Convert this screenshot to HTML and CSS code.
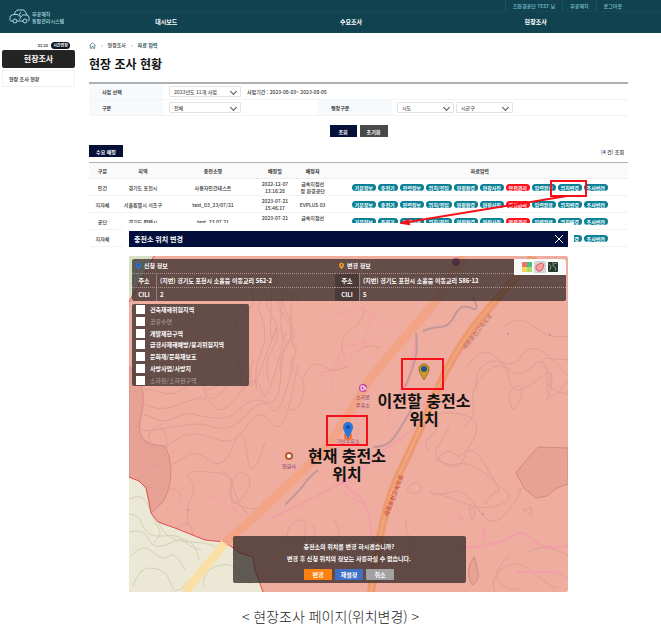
FILE: index.html
```html
<!DOCTYPE html>
<html lang="ko">
<head>
<meta charset="utf-8">
<title>현장 조사 현황</title>
<link rel="stylesheet" href="styles.css">
</head>
<body>
<div class="stage">
  <div class="page">
    <header class="header">
      <a class="logo" href="#">
        <svg class="logo-car" viewBox="0 0 21 15" aria-hidden="true">
          <path d="M4 12H2Q1 12 1 10.500V8.500Q1 6.500 3 6L5 5.500 7 2Q7.500 1 9 1h5q1.500 0 2 1l2 4q2 .5 2 2.500V11q0 1-1 1M8 12h6M5 5.500h4M13 6h5"/>
          <circle cx="6" cy="12" r="2"/><circle cx="16" cy="12" r="2"/>
          <path d="M12 3 9.500 7h3L10.500 10.500"/>
        </svg>
        <span>무공해차<br>통합관리시스템</span>
      </a>
      <div class="user-links"><a href="#">즈환경공단 TEST 님</a><a href="#">무공해차</a><a href="#">로그아웃</a></div>
      <nav class="menu"><a href="#">대시보드</a><a href="#">수요조사</a><a href="#">현장조사</a></nav>
    </header>
    <div class="columns">
      <aside class="sidebar">
        <div class="session"><span>02:20</span><button>시간연장</button></div>
        <a class="side-title" href="#">현장조사</a>
        <a class="side-item" href="#">현장 조사 현황</a>
      </aside>
      <main class="main">
        <div class="crumbs">
          <svg class="home" viewBox="0 0 7 7" aria-hidden="true"><path d="M.5 3.500 3.500.7l3 2.800M1.200 3v3.300h1.600V4.500h1.400v1.800h1.600V3"/></svg>
          <i>›</i><span>현장조사</span><i>›</i><b>자료 입력</b>
        </div>
        <h1>현장 조사 현황</h1>
        <form class="search">
          <div class="search-row">
            <label class="name" for="project">사업 선택</label>
            <div class="field"><span class="pick wide"><select id="project"><option>2023년도 11개 사업</option></select></span><span>사업기간 : 2023-08-03~ 2023-08-05</span></div>
          </div>
          <div class="search-row split">
            <label class="name" for="kind">구분</label>
            <div class="field"><span class="pick wide"><select id="kind"><option>전체</option></select></span></div>
            <label class="name" for="sido">행정구분</label>
            <div class="field near"><span class="pick"><select id="sido"><option>시도</option></select></span><span class="pick"><select aria-label="시군구"><option>시군구</option></select></span></div>
          </div>
          <div class="actions"><button type="button">조회</button><button type="button" class="reset">초기화</button></div>
        </form>
        <div class="list-head"><button>수요 매핑</button><span>[<b>4</b> 건] 조회</span></div>
        <table>
          <colgroup><col class="c-kind"><col class="c-area"><col class="c-name"><col class="c-date"><col class="c-date"><col></colgroup>
          <thead><tr><th>구분</th><th>지역</th><th>충전소명</th><th>배정일</th><th>배정자</th><th>자료입력</th></tr></thead>
          <tbody>
            <tr><td>민간</td><td>경기도 포천시</td><td>사용자민간테스트</td><td>2022-12-07<br>13:16:28</td><td>급속지점선<br>정 환경공단</td>
              <td><div class="pills"><button>기본정보</button><button class="short">충전기</button><button>전력정보</button><button class="long">위치/진입</button><button>현장환경</button><button>현장사진</button><button class="red">안전관리</button><button>입력완료</button><button>위치변경</button><button>조사반려</button></div></td></tr>
            <tr><td>지자체</td><td>서울특별시 서초구</td><td>test_03_23/07/21</td><td>2023-07-21<br>15:46:17</td><td>EVPLUS 03</td>
              <td><div class="pills"><button>기본정보</button><button class="short">충전기</button><button>전력정보</button><button class="long">위치/진입</button><button>현장환경</button><button>현장사진</button><button class="red">안전관리</button><button>입력완료</button><button>위치변경</button><button>조사반려</button></div></td></tr>
            <tr><td>공단</td><td>경기도 평택시</td><td>test_23.07.21</td><td>2023-07-21<br>15:40:02</td><td>급속지점선<br>정 환경공단</td>
              <td><div class="pills"><button>기본정보</button><button class="short">충전기</button><button>전력정보</button><button class="long">위치/진입</button><button>현장환경</button><button>현장사진</button><button class="red">안전관리</button><button>입력완료</button><button>위치변경</button><button>조사반려</button></div></td></tr>
            <tr><td>지자체</td><td></td><td></td><td></td><td></td>
              <td><div class="pills"><button>기본정보</button><button class="short">충전기</button><button>전력정보</button><button class="long">위치/진입</button><button>현장환경</button><button>현장사진</button><button class="red">안전관리</button><button>입력완료</button><button>위치변경</button><button>조사반려</button></div></td></tr>
          </tbody>
        </table>
      </main>
    </div>
  </div>

  <section class="dialog" role="dialog" aria-labelledby="dialog-title">
    <div class="dialog-bar">
      <h2 id="dialog-title">충전소 위치 변경</h2>
      <button aria-label="닫기"><svg viewBox="0 0 10 10"><path d="M1 1l8 8M9 1L1 9"/></svg></button>
    </div>
    <div class="map">
      <svg class="map-art" viewBox="0 0 439 336" preserveAspectRatio="xMidYMid slice">
        <rect width="439" height="336" fill="#efada0"/>
        <path class="shade" d="M0 110Q20 130 12 160T36 190L40 200Q46 225 34 246L22 257 17 232 0 221Z"/>
        <path class="shade" d="M387 217 398 203 409 191 439 192V228L428 232 418 240 407 242 396 233Z"/>
        <path class="shade" d="M345 301q-10 14-2 28 8-4 6-14t-4-14Z"/>
        <g class="contour">
          <path d="M0 128q14-10 30-4t24-6 18 8 24-12 16 4 12-16"/>
          <path d="M0 138q16-8 30-2t28-6 18 6 26-10 20-4 14-20 10-24-4-28 6-22"/>
          <path d="M0 148q12-2 20 2t18 2 24-8 22 6 26-12 22-4 16-24 8-30-4-24 8-18"/>
          <path d="M2 160q12-4 22 2t22 0 18-4 22 4 26-10 24-6 16-28 10-34-4-26 6-18"/>
          <path d="M6 170q8 6 20 4t24-4 18-2 20 4 30-14 24-6 18-28 6-34-4-30 8-14"/>
          <path d="M10 174q4 16 14 18t20-6 20-8 26 6 28-14 24-4 20-24 8-32"/>
          <path d="M22 176q4-8 10-4t6 16-6 14-10-12 0-14Z"/>
          <path d="M10 216q8-8 20-6t24-8 26 2 24-14 14 8 18-12M28 208q-14 8-18 16t22 8 18 14"/>
          <path d="M60 270q-4-16 2-28t-2-20 20-6 22 14 10 20 24-6M92 214q10 6 14 22t14 22"/>
          <path d="M104 225q6-14 14-6t-4 22-12-2 2-14Z"/>
          <path d="M128 134q-4-20 4-38t0-36 10-16M140 126q-6-18 4-34t-2-34 10-14M152 118q-4-14 6-28t-4-32 8-14"/>
          <path d="M126 10q-6 16-2 28t-10 20 0 20-8 30M164 100q-6 12 4 18t6 22-14 14"/>
          <path d="M0 275q12-12 24-2t26-2 14 14 20 0M0 292q18-12 30 0t26-2 22 8M0 310q16-10 24 2t24 2 18 10 16-8"/>
          <path d="M0 328q12-16 24-6t18 2 14 8M76 334q4-18 20-20t20-10"/>
          <path d="M372 74q16-18 32-4t35 10M338 110q16-22 30-8t26-4 45 22"/>
          <path d="M348 134q-4-18 8-26t22 4 26-2 14 16 21-2M334 172q14-12 10-26t14-30 22 6 28 2 10 20"/>
          <path d="M439 104 416 102 412 108 422 118 420 130 428 136 439 138"/>
          <path d="M380 144q0-12 8-14t4 10-8 14Z"/>
          <path d="M300 194q-8-4 2-14t6-18 22-4 14 26-18 14-20 6M320 170q-6 14-12 22t8 16 20-8 22 12 12 24-14 12"/>
          <path d="M308 204q10 6 20 4t20 4 16 12 14 12-6 12-28 2-22-8-20-4M300 236q12 4 24 0t26 18 30 0 10-20 22-10"/>
          <path d="M284 228q6-4 8 3t-8 6-2-9ZM342 252q5-2 3 8t-5-8ZM394 254l8-2 1 7Z"/>
          <path d="M278 264q-4 10 4 18t-2 16M400 296q12-8 28-2t11 10M366 336q-6-14 8-24t30 4 24 16"/>
          <path d="M380 300q-14 12-12 22t22 12M160 288q-6-14 6-22t10 12-6 18M184 268q6 10-4 22M204 262q10 12 4 24"/>
          <path d="M220 110q-16 8-26 0t-20 12M216 100q-10-14 6-26t12-24M252 92q-16-6-24 4"/>
        </g>
        <path d="M0 0H25L0 46Z" fill="#d8dfc7"/>
        <path d="M0 221 10 225 17 232Q20 246 22 257L29 266 46 272 76 284 96 286 111 297 124 301 126 314 134 336H0Z" fill="#ebe9d5"/>
        <g class="contour green"><path d="M0 243q14-8 20 8t10 22-6 14M0 258q10 0 14 12t20 10 20 4 18 10M0 276q16-4 20 8t24 2 26 18M2 300q12-14 22-4t16 4 16 14M4 330q6-20 20-18t18 16 16-2M74 330q0-16 14-20t20 4 14 14M30 268q8 18 30 18t30 8"/></g>
        <path d="M0 46 25 0M0 221 10 225 17 232Q20 246 22 257L29 266 46 272 76 284 96 286 111 297 124 301 126 314 134 336" class="limit"/>
        <g class="lane">
          <path d="M204 60l28-8 22 14 28 12 14-14 22-22M222 32l20 30-10 32-14 8-20 14M196 200l-14 10-20 2-14-10M78 240l20 8 16 12 14 0 6-4"/>
          <path d="M186 118l18-4 0 22M204 114l10-24 26-4 20-10"/>
          <path d="M236 134q-14 24-8 32t-8 30 4 32M240 210l18-10 10-8M214 236l30 18 24-12"/>
          <path d="M142 262q36-16 64-32 16-6 28-18t30-24l20-14" class="broad"/>
          <path d="M205 214q10 16 22 24t14 30 14 18" class="broad"/>
          <path d="M294 150 340 86 384 20M288 78l-8 44-22 40" class="broad"/>
          <path d="M334 292q24-2 36-6t18-8 16 6 35 6M354 286l2-14M330 260l6 6M386 316h40l13 6" class="broad"/>
        </g>
        <path d="M56 336 96 287" stroke="#fae0a7" stroke-width="9" fill="none"/>
        <path d="M96 287 122 264 196 194Q214 168 242 121L306 46 334 0" class="highway soft"/>
        <path d="M242 336 251 281Q258 246 266 227L292 171 316 117Q334 82 356 57L405 0" class="highway"/>
        <path d="M242 336 251 281Q258 246 266 227L292 171 316 117Q334 82 356 57L405 0" class="median"/>
        <path class="river" d="M294 75q10-4 18-4t14-12 16-7 2-11M287 77q2 16-1 27t-10 27M156 249q16-16 20-22t13-13M244 191q12 0 18-6t24-38"/>
        <g class="road-name">
          <text transform="translate(336 94) rotate(-51)">세종포천고속도로</text>
          <text transform="translate(259 261) rotate(-69)" class="strong">세종포천고속도로</text>
        </g>
        <circle cx="327" cy="6" r="4" fill="#9f4e84"/>
        <circle cx="234" cy="132" r="4" fill="#c6459b"/><path d="M232 130h3v4h-3zM235 131l2 1v2" fill="none" stroke="#fff"/>
        <circle cx="160" cy="200" r="3" fill="#fff" stroke="#b9552f" stroke-width="2"/>
        <g class="place"><text x="234" y="143">소리로</text><text x="234" y="151">주유소</text><text x="160" y="212">현금사</text><text x="219" y="187">기산주유소</text></g>
        <g fill="#b89398"><circle cx="354" cy="258" r="1"/><circle cx="379" cy="78" r="1"/><circle cx="421" cy="79" r="1"/><circle cx="59" cy="254" r="1"/></g>
        <circle cx="219" cy="180" r="3" fill="none" stroke="#ff6c18" stroke-width="2"/>
        <path d="M219 183Q214 174 214 171a5 5 0 0 1 10 0Q224 174 219 183Z" fill="#2876dc"/><circle cx="219" cy="171" r="2" fill="#154f9f"/>
        <path d="M295 124Q290 116 290 113a5 5 0 0 1 10 0Q300 116 295 124Z" fill="#d29a20" stroke="#8d7132"/><circle cx="295" cy="113" r="3" fill="#1b568d"/>
        <g class="mark"><rect x="273" y="103" width="41" height="30"/><rect x="198" y="160" width="40" height="29"/></g>
        <g class="callout"><text x="295" y="151">이전할 충전소</text><text x="295" y="169">위치</text><text x="218" y="206">현재 충전소</text><text x="218" y="224">위치</text></g>
      </svg>
      <div class="map-panels">
        <div class="info">
          <dl><div class="info-head"><svg viewBox="0 0 6 8"><path d="M3 8Q0 4 0 3a3 3 0 0 1 6 0Q6 4 3 8Z" fill="#2378df"/><circle cx="3" cy="3" r="1" fill="#114c9b"/></svg>신청 정보</div>
            <div><dt>주소</dt><dd>(지번) 경기도 포천시 소흘읍 이동교리 562-2</dd></div><div><dt>CILI</dt><dd>2</dd></div></dl>
          <dl class="after"><div class="info-head"><svg viewBox="0 0 6 8"><path d="M3 8Q0 4 0 3a3 3 0 0 1 6 0Q6 4 3 8Z" fill="#eda01d"/><circle cx="3" cy="3" r="1" fill="#44433c"/></svg>변경 정보</div>
            <div><dt>주소</dt><dd>(지번) 경기도 포천시 소흘읍 이동교리 586-12</dd></div><div><dt>CILI</dt><dd>5</dd></div></dl>
          <div class="tools">
            <button aria-label="일반 지도"><svg viewBox="0 0 10 10"><path fill="#ec7568" d="M0 0h5v5H0z"/><path fill="#4bc07a" d="M5 0h5v5H5z"/><path fill="#f5d75f" d="M0 5h5v5H0z"/><path fill="#a8dc68" d="M5 5h5v5H5z"/></svg></button>
            <button class="on" aria-label="규제 지역"><svg viewBox="0 0 10 10"><path d="M1 4l3-2 3-1 2 2-1 3-2 3-3 0-2-2z" fill="#f3a2a2" stroke="#df5961"/></svg></button>
            <button aria-label="위성 지도"><svg viewBox="0 0 10 10"><rect width="10" height="10" rx="1" fill="#26382e"/><path d="M1 2l2 2-1 4M5 0v4l3 2-1 3M6 2l3-1" fill="none" stroke="#80937a"/></svg></button>
          </div>
        </div>
        <div class="layers">
          <label><input type="checkbox">건축재해위험지역</label>
          <label class="off"><input type="checkbox">공유수면</label>
          <label><input type="checkbox">개발제한구역</label>
          <label><input type="checkbox">급경사재해예방/붕괴위험지역</label>
          <label><input type="checkbox">문화재/문화재보호</label>
          <label><input type="checkbox">사방사업/사방지</label>
          <label class="off"><input type="checkbox">소하천/소하천구역</label>
        </div>
        <div class="confirm">
          <p>충전소의 위치를 변경 하시겠습니까?</p>
          <p>변경 후 신청 위치의 정보는 사용하실 수 없습니다.</p>
          <div><button class="ok">변경</button><button class="redo">재설정</button><button class="cancel">취소</button></div>
        </div>
      </div>
    </div>
  </section>
  <svg class="pointer" viewBox="0 0 188 48" aria-hidden="true"><rect x="151" y="2" width="35" height="15"/><path d="M167 17 8 43"/><path class="tip" d="M2 44 8 41 9 45Z"/></svg>
</div>
<p class="caption">&lt; 현장조사 페이지(위치변경) &gt;</p>
</body>
</html>
```
FILE: styles.css
```css
* { box-sizing: border-box; }
body { margin: 0; background: #fff; color: #333; font: 500 5px/7px "Noto Sans CJK KR", "Noto Sans", sans-serif; }
a { color: inherit; text-decoration: none; }
button, select { font: inherit; padding: 0; border: 0; margin: 0; }
h1, h2, p, dl, dd { margin: 0; }
svg { display: block; }
.stage { display: grid; position: relative; }
.page, .dialog { grid-area: 1 / 1; min-width: 0; }

.header { display: grid; grid-template: 12px 21px / 74px 1fr; background: #10434f; color: #fff; }
.logo { grid-row: 1 / 3; display: flex; align-items: center; gap: 2px; padding-left: 9px; color: #a9d5de; white-space: nowrap; }
.logo-car { width: 21px; height: 15px; flex: none; fill: none; stroke: #a9d5de; }
.user-links { display: flex; justify-content: flex-end; padding-right: 32px; color: #79bfcd; line-height: 12px; border-bottom: 1px solid #144a57; }
.user-links a { padding: 0 7px; border-left: 1px solid #1b5361; }
.menu { display: grid; grid-template-columns: repeat(3, 1fr); padding-right: 33px; text-align: center; font-weight: 700; font-size: 6px; line-height: 20px; }

.columns { display: grid; grid-template-columns: 75px 1fr; }
.sidebar { padding: 8px 0 0 2px; }
.session { display: flex; justify-content: flex-end; align-items: center; gap: 3px; padding-right: 5px; height: 9px; font-size: 4px; }
.session button { width: 19px; height: 7px; border-radius: 4px; background: #0c1720; color: #fff; font-weight: 700; line-height: 7px; }
.side-title { display: block; border-radius: 2px; background: #242424; color: #fff; text-align: center; font-weight: 700; font-size: 8px; line-height: 18px; }
.side-item { display: block; margin-top: 2px; padding-left: 6px; border: 1px solid #f1f1f1; line-height: 15px; color: #222; }

.main { padding: 8px 33px 0 14px; }
.crumbs { display: flex; align-items: center; gap: 5px; line-height: 8px; }
.crumbs i { font-style: normal; color: #4a9cad; }
.crumbs b { color: #274b5b; }
.home { width: 7px; height: 7px; fill: none; stroke: #78949d; }
h1 { margin: 7px 0 10px; color: #111; font-size: 12px; line-height: 16px; }
.search { border-top: 2px solid #b0b0b0; }
.search-row { display: grid; grid-template-columns: 74px 1fr; height: 16px; border-bottom: 1px solid #f4f4f4; }
.search-row.split { grid-template-columns: 74px 155px 74px 1fr; }
.name { padding-left: 13px; background: #f6fafc; color: #222; line-height: 15px; }
.field { display: flex; align-items: center; gap: 6px; padding-left: 6px; }
.field.near { gap: 2px; padding-left: 5px; }
.pick { position: relative; width: 57px; height: 11px; border: 1px solid #e3e3e3; border-radius: 1px; }
.pick.wide { width: 72px; }
.pick select { display: block; width: 100%; height: 9px; padding-left: 4px; appearance: none; background: #fff; color: #555; line-height: 9px; }
.pick::after { content: ""; position: absolute; right: 4px; top: 2px; width: 4px; height: 4px; border: solid #555; border-width: 0 1px 1px 0; transform: rotate(45deg); }
.actions { display: flex; justify-content: center; gap: 3px; margin: 9px 0 8px; }
.actions button { width: 27px; height: 12px; background: #050f38; color: #fff; font-weight: 700; }
.actions .reset { width: 28px; background: #494949; }
.list-head { display: flex; justify-content: space-between; align-items: center; margin-bottom: 5px; padding-right: 4px; }
.list-head button { width: 34px; height: 12px; background: #050f38; color: #fff; font-weight: 700; }
.list-head b { color: #3353b0; }

table { width: 100%; table-layout: fixed; border-collapse: separate; border-spacing: 0; border-top: 1px solid #b3b3b3; text-align: center; }
.c-kind { width: 5%; }
.c-area { width: 10%; }
.c-name { width: 16%; }
.c-date { width: 7%; }
th { height: 16px; padding: 0; border-bottom: 1px solid #eee; background: #fafafa; color: #333; }
td { height: 17px; padding: 0; border-bottom: 1px solid #f3f3f3; white-space: nowrap; }
.pills { display: flex; justify-content: center; gap: 2px; }
.pills button { width: 24px; height: 7px; border-radius: 4px; background: #087f95; color: #fff; font-weight: 700; line-height: 7px; }
.pills .short { width: 20px; }
.pills .long { width: 26px; }
.pills .red { background: #f80f19; }

.dialog { margin: 223px 87px 0 123px; padding: 8px 6px 0; background: #fff; z-index: 1; }
.dialog-bar { display: flex; justify-content: space-between; align-items: center; height: 16px; padding: 0 4px 0 5px; background: #030f3a; color: #fff; }
h2 { font-size: 7px; line-height: 16px; }
.dialog-bar button { background: none; }
.dialog-bar svg { width: 10px; height: 10px; fill: none; stroke: #fff; }
.map { display: grid; margin-top: 9px; aspect-ratio: 439 / 336; border-radius: 2px; overflow: hidden; }
.map-art, .map-panels { grid-area: 1 / 1; width: 100%; height: 100%; min-height: 0; }
.contour { fill: none; stroke: #de9f93; }
.contour.green { stroke: #d3cfb9; }
.shade { fill: #e8a195; stroke: #d08a7e; }
.limit { fill: none; stroke: #e5494c; }
.lane { fill: none; stroke: #f59da8; }
.lane .broad { stroke-width: 2; }
.highway { fill: none; stroke: #ed9a70; stroke-width: 8; }
.highway.soft { stroke: #f3a486; stroke-width: 9; }
.median { fill: none; stroke: #f3b28d; }
.river { fill: none; stroke: #c4979a; stroke-width: 2; }
.road-name { font-size: 6px; fill: #bd7358; }
.road-name .strong { fill: #c54b3e; }
.place { font-size: 5px; fill: #a05a72; text-anchor: middle; }
.mark { fill: none; stroke: #f5101a; stroke-width: 2; }
.callout { font-size: 16px; font-weight: 700; fill: #111; text-anchor: middle; }

.map-panels { z-index: 1; display: flex; flex-direction: column; align-items: flex-start; padding: 3px 2px 9px 3px; color: #fff; font-size: 6px; font-weight: 700; }
.info { position: relative; display: grid; grid-template-columns: 203px 1fr; width: 100%; border-radius: 2px; overflow: hidden; background: rgb(42 34 34 / 70%); }
.info dl > div { display: flex; height: 14px; line-height: 14px; border-top: 1px dotted #a99391; }
.info dl > .info-head { align-items: center; gap: 3px; padding-left: 4px; border-top: 0; }
.info-head svg { width: 5px; height: 8px; }
.info dt { width: 25px; text-align: center; border-right: 1px solid #917f7e; }
.info dd { padding-left: 3px; }
.info .after dt { background: rgb(30 25 25 / 35%); }
.tools { position: absolute; top: 0; right: 0; display: flex; align-items: center; gap: 1px; height: 16px; padding: 0 7px; background: #f9f9f9; }
.tools button { padding: 1px; border-radius: 2px; background: none; }
.tools .on { background: #d4d4d4; }
.tools svg { width: 10px; height: 10px; }
.layers { display: grid; grid-template-rows: repeat(7, 1fr); width: 117px; height: 82px; margin-top: 3px; padding-left: 4px; border-radius: 2px; background: rgb(42 34 34 / 70%); }
.layers label { display: flex; align-items: center; gap: 5px; }
.layers .off { color: #a69897; font-weight: 500; }
.layers input { appearance: none; width: 9px; height: 9px; margin: 0; background: #fff; }
.confirm { align-self: center; width: 233px; margin-top: auto; padding: 5px 0 3px; border-radius: 2px; background: rgb(42 34 34 / 72%); text-align: center; line-height: 12px; }
.confirm div { display: flex; justify-content: center; gap: 3px; margin-top: 4px; }
.confirm button { width: 28px; height: 11px; border-radius: 1px; color: #fff; }
.ok { background: #fb8110; }
.redo { background: #4070c5; }
.cancel { background: #a2a2a2; }
.pointer { position: absolute; z-index: 2; left: 400px; top: 179px; width: 188px; height: 48px; fill: none; stroke: #f5101a; stroke-width: 2; pointer-events: none; }
.pointer .tip { fill: #f5101a; }
.caption { margin-top: 15px; text-align: center; color: #222; font-size: 14px; font-weight: 300; line-height: 18px; }
```
